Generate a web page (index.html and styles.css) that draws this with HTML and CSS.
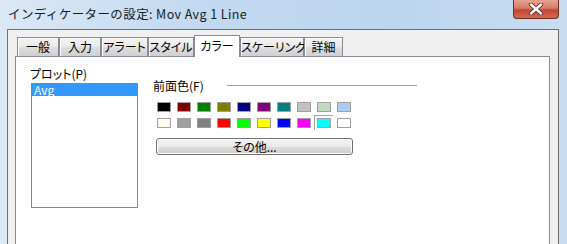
FILE: index.html
```html
<!DOCTYPE html>
<html lang="ja">
<head>
    <meta charset="UTF-8">
    <title>インディケーターの設定: Mov Avg 1 Line</title>
    <link rel="stylesheet" href="styles.css">
</head>
<body>
    <div class="window">
        <div class="titlebar">
            <div class="caption">インディケーターの設定: Mov Avg 1 Line</div>
            <div class="close">
                <svg width="18" height="12" viewBox="0 0 18 12">
                    <path d="M4 1.5 L14 10.5 M14 1.5 L4 10.5" stroke="#5b2b26" stroke-width="4.2" stroke-linecap="round"/>
                    <path d="M4 1.5 L14 10.5 M14 1.5 L4 10.5" stroke="#ffffff" stroke-width="2.4" stroke-linecap="round"/>
                </svg>
            </div>
        </div>
        <div class="client">
            <div class="tabs">
                <div class="tab">一般</div>
                <div class="tab">入力</div>
                <div class="tab">アラート</div>
                <div class="tab">スタイル</div>
                <div class="tab active">カラー</div>
                <div class="tab">スケーリング</div>
                <div class="tab">詳細</div>
            </div>
            <div class="panel">
                <div class="plots">
                    <div class="label">プロット(P)</div>
                    <div class="listbox">
                        <div class="item selected">Avg</div>
                    </div>
                </div>
                <div class="colors">
                    <div class="group">
                        <span class="group-label">前面色(F)</span>
                        <span class="group-line"></span>
                    </div>
                    <div class="swatches">
                        <div class="swatch c-black"></div>
                        <div class="swatch c-maroon"></div>
                        <div class="swatch c-green"></div>
                        <div class="swatch c-olive"></div>
                        <div class="swatch c-navy"></div>
                        <div class="swatch c-purple"></div>
                        <div class="swatch c-teal"></div>
                        <div class="swatch c-silver"></div>
                        <div class="swatch c-money"></div>
                        <div class="swatch c-sky"></div>
                        <div class="swatch c-cream"></div>
                        <div class="swatch c-medgray"></div>
                        <div class="swatch c-gray"></div>
                        <div class="swatch c-red"></div>
                        <div class="swatch c-lime"></div>
                        <div class="swatch c-yellow"></div>
                        <div class="swatch c-blue"></div>
                        <div class="swatch c-fuchsia"></div>
                        <div class="swatch c-aqua sel"></div>
                        <div class="swatch c-white"></div>
                    </div>
                    <button class="more">その他...</button>
                </div>
            </div>
        </div>
    </div>
</body>
</html>
```

FILE: styles.css
```css
*{
    margin: 0px;
    padding: 0px;
    box-sizing: border-box;
}
body{
    width: 567px;
    height: 244px;
    overflow: hidden;
    font-family: "Noto Sans CJK JP", sans-serif;
    font-size: 12px;
    font-feature-settings: "palt";
    color: #000000;
}
.window{
    height: 244px;
    display: flex;
    flex-direction: column;
    background: linear-gradient(to right, #dbe8f6 0%, #c3d9f0 35%, #bcd5ef 70%, #c9ddf2 100%);
}
.titlebar{
    height: 29px;
    display: flex;
    align-items: center;
    padding-left: 8px;
    padding-right: 8px;
}
.caption{
    font-size: 12.5px;
    font-feature-settings: normal;
    letter-spacing: 0.4px;
    color: #151c26;
    line-height: 16px;
    margin-top: -2px;
}
.close{
    margin-left: auto;
    align-self: flex-start;
    width: 46px;
    height: 19px;
    border: 1px solid #6a3028;
    border-top: none;
    border-radius: 0 0 4px 4px;
    background: linear-gradient(#e8a293 0%, #d77a68 45%, #c44632 55%, #d06a55 100%);
    display: flex;
    align-items: center;
    justify-content: center;
}
.client{
    flex: 1;
    margin-left: 7px;
    margin-right: 8px;
    border: 1px solid #6b7179;
    border-bottom: none;
    background-color: #f0f0f0;
    padding-top: 5px;
    padding-left: 7px;
    padding-right: 8px;
    display: flex;
    flex-direction: column;
}
.tabs{
    display: grid;
    grid-template-columns: 42px 42px 47px 46px 46px 64px 39px;
    align-items: end;
    margin-left: 2px;
}
.tab{
    height: 19px;
    border: 1px solid #898c95;
    border-bottom: none;
    box-shadow: inset 1px 1px 0 #fcfcfc;
    background: linear-gradient(#f3f3f3 0%, #ebebeb 45%, #dddddd 55%, #cfcfcf 100%);
    text-align: center;
    line-height: 17px;
    white-space: nowrap;
}
.tab.active{
    height: 22px;
    margin-bottom: -1px;
    background: #ffffff;
    box-shadow: none;
    line-height: 19px;
    position: relative;
    z-index: 1;
}
.panel{
    flex: 1;
    border: 1px solid #898c95;
    border-bottom: none;
    background-color: #ffffff;
    display: flex;
    padding-top: 10px;
    padding-left: 15px;
}
.label{
    line-height: 14px;
    margin-left: -1px;
}
.listbox{
    margin-top: 2px;
    width: 107px;
    height: 125px;
    border: 1px solid #828790;
}
.item{
    height: 12px;
    line-height: 12px;
    padding-left: 2px;
}
.item.selected{
    background-color: #3399ff;
    color: #ffffff;
}
.colors{
    margin-left: 15px;
    margin-top: 12px;
    width: 264px;
}
.group{
    display: flex;
    align-items: center;
    height: 14px;
}
.group-label{
    width: 74px;
    line-height: 14px;
}
.group-line{
    flex: 1;
    height: 1px;
    margin-top: -1px;
    background-color: #a0a0a0;
}
.swatches{
    margin-top: 9px;
    margin-left: 4px;
    display: grid;
    grid-template-columns: repeat(10, 14px);
    column-gap: 6px;
    row-gap: 6px;
}
.swatch{
    height: 10px;
    border: 1px solid #a0a0a0;
}
.swatch.sel{
    position: relative;
}
.swatch.sel::before{
    content: "";
    position: absolute;
    left: -4px;
    top: -4px;
    right: -3px;
    bottom: -3px;
    border-top: 1px solid #a0a0a0;
    border-left: 1px solid #a0a0a0;
}
.c-black{ background-color: #000000; }
.c-maroon{ background-color: #800000; }
.c-green{ background-color: #008000; }
.c-olive{ background-color: #808000; }
.c-navy{ background-color: #000080; }
.c-purple{ background-color: #800080; }
.c-teal{ background-color: #008080; }
.c-silver{ background-color: #c0c0c0; }
.c-money{ background-color: #c0dcc0; }
.c-sky{ background-color: #a6caf0; }
.c-cream{ background-color: #fffbf0; }
.c-medgray{ background-color: #a0a0a4; }
.c-gray{ background-color: #808080; }
.c-red{ background-color: #ff0000; }
.c-lime{ background-color: #00ff00; }
.c-yellow{ background-color: #ffff00; }
.c-blue{ background-color: #0000ff; }
.c-fuchsia{ background-color: #ff00ff; }
.c-aqua{ background-color: #00ffff; }
.c-white{ background-color: #ffffff; }
.more{
    display: block;
    margin-top: 10px;
    margin-left: 3px;
    width: 197px;
    height: 17px;
    border: 1px solid #707070;
    border-radius: 3px;
    box-shadow: inset 0 0 0 1px #fbfbfb;
    background: linear-gradient(#f2f2f2 0%, #ebebeb 50%, #dddddd 50%, #cfcfcf 100%);
    font-family: "Noto Sans CJK JP", sans-serif;
    font-size: 12px;
    font-feature-settings: "palt";
    line-height: 14px;
    color: #000000;
}
```
